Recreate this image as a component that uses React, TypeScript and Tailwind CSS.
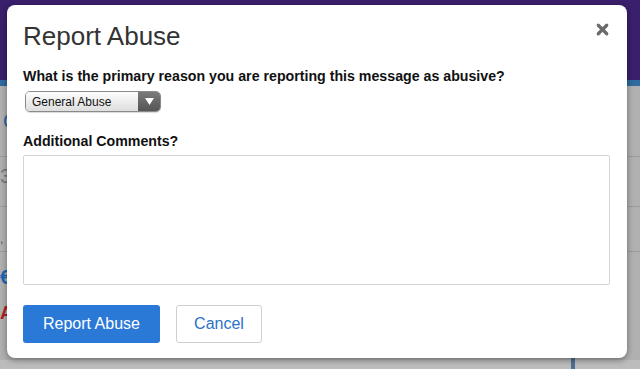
import { X } from 'lucide-react';

const font = { fontFamily: '"Liberation Sans", Arial, sans-serif' };

function Backdrop() {
  // the page behind the dialog, dimmed by the overlay
  return (
    <div className="absolute inset-0 flex flex-col bg-[#b0b0b0]">
      <div className="h-[80px] bg-[#3a1f6c]" />
      <div className="h-[6px] bg-[#2f6aa0]" />
      <div className="flex flex-col text-[20px] leading-none">
        <div className="h-[71px] border-b border-[#9c9c9c] flex items-center pl-[3px] text-[#2a66a8]">C</div>
        <div className="h-[50px] border-b border-[#9c9c9c] pt-[9px] text-[#7a7a7a]">3</div>
        <div className="h-[45px] border-b border-[#9c9c9c] pt-[26px] text-[#555] text-[12px]">,</div>
        <div className="h-[50px] flex items-center text-[#1e66b5] font-bold">€</div>
        <div className="h-[22px] flex items-center text-[#b31c1c] font-bold text-[18px]">A</div>
      </div>
      <div className="absolute left-0 right-0 top-[360px] bottom-0 bg-[#bcbcbc]" />
      <div className="absolute left-[571px] top-[358px] w-[4px] h-[11px] bg-[#4d6f96]" />
    </div>
  );
}

export default function App() {
  return (
    <div className="relative w-[640px] h-[369px] overflow-hidden" style={font}>
      <Backdrop />

      {/* Dialog */}
      <div className="absolute left-[7px] top-[5px] w-[620px] h-[353px] bg-white rounded-[8px] shadow-[0_2px_6px_rgba(0,0,0,0.4)] px-[16px] pt-[16px]">
        <button className="absolute right-[16px] top-[16px] text-[#6b6b6b]">
          <X className="w-[17px] h-[17px]" strokeWidth={4.5} />
        </button>

        <h2 className="text-[26px] leading-[30px] text-[#333] font-normal">Report Abuse</h2>

        <p className="mt-[16px] text-[14.2px] leading-[18px] font-bold text-[#111]">
          What is the primary reason you are reporting this message as abusive?
        </p>

        <div className="mt-[6px] ml-[2px] w-[136px] h-[21px] flex rounded-[5px] border border-[#8a8a8a] overflow-hidden shadow-[0_1px_1px_rgba(0,0,0,0.15)]">
          <div className="flex-1 flex items-center pl-[6px] text-[12px] text-[#111] bg-gradient-to-b from-[#fdfdfd] to-[#dedede]">
            General Abuse
          </div>
          <div className="w-[22px] flex items-center justify-center bg-gradient-to-b from-[#7a7a7a] to-[#555]">
            <svg width="9" height="7" viewBox="0 0 9 7">
              <path d="M0 0h9L4.5 7z" fill="#fff" />
            </svg>
          </div>
        </div>

        <p className="mt-[20px] text-[14.2px] leading-[18px] font-bold text-[#111]">Additional Comments?</p>

        <textarea className="mt-[5px] block w-[587px] h-[130px] border border-[#d4d4d4] rounded-[2px] resize-none outline-none" />

        <div className="mt-[20px] flex gap-[16px]">
          <button className="w-[137px] h-[38px] rounded-[3px] bg-[#2a79d6] text-white text-[16px]">Report Abuse</button>
          <button className="w-[86px] h-[38px] rounded-[3px] border border-[#cfcfcf] bg-white text-[#2a72c9] text-[16px]">
            Cancel
          </button>
        </div>
      </div>
    </div>
  );
}
